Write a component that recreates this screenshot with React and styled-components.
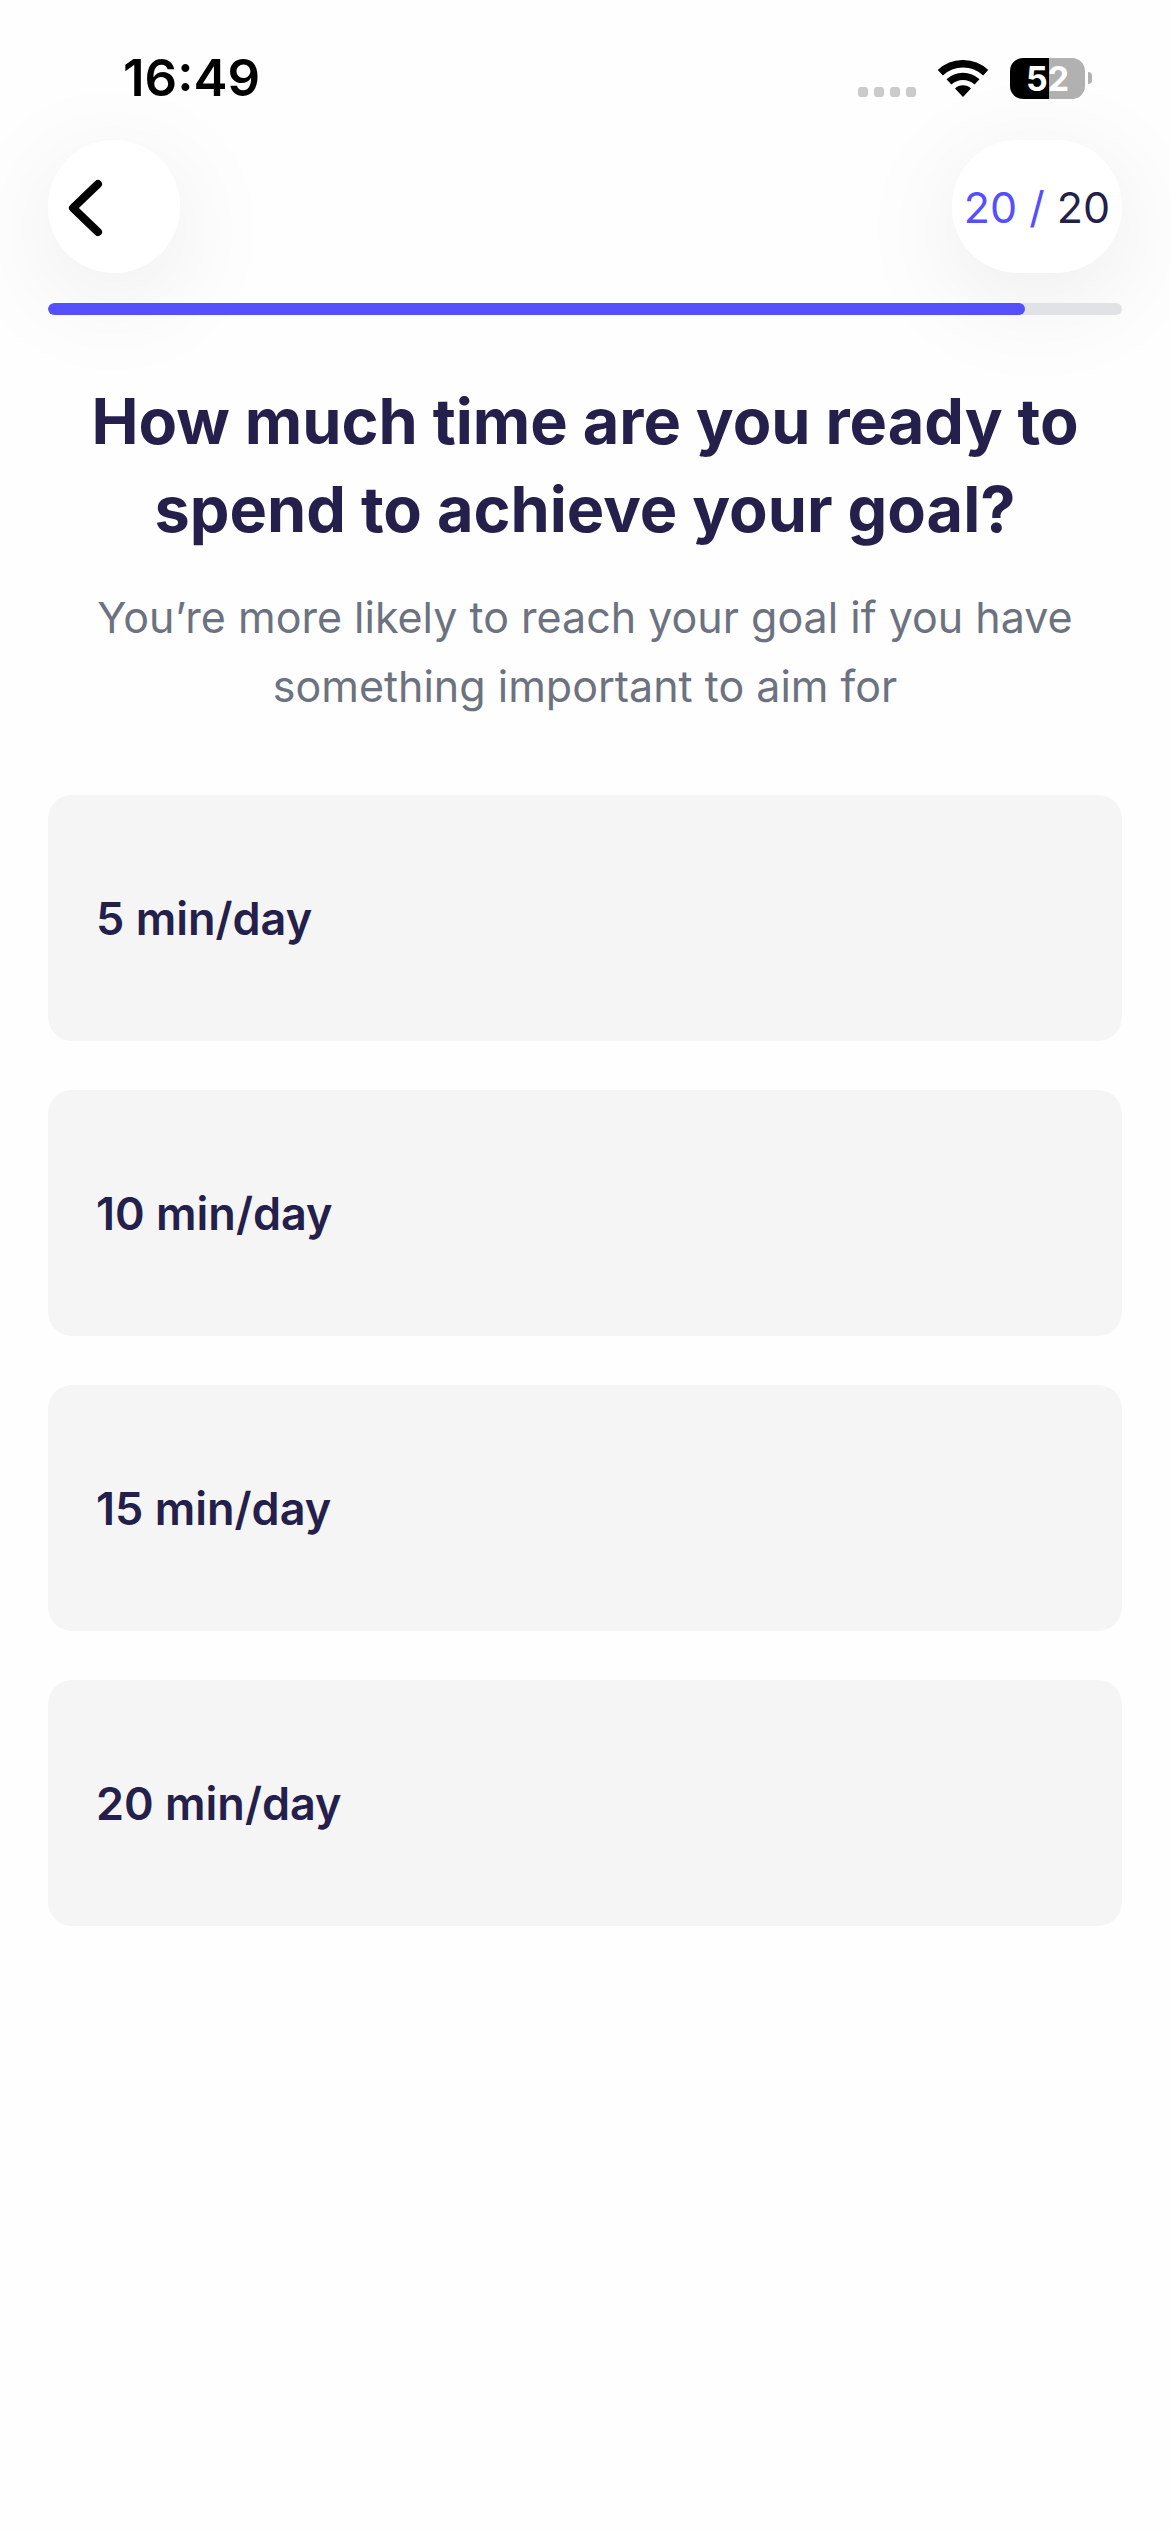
import React, { useState } from "react";
import styled, { createGlobalStyle } from "styled-components";

const colors = {
  ink: "#241f4b",
  accent: "#5550ff",
  muted: "#6d7280",
  card: "#f5f5f5",
  track: "#e0e2e5",
};

const GlobalStyle = createGlobalStyle`
  * { box-sizing: border-box; }
  body {
    margin: 0;
    background: #fefefe;
    color: ${colors.ink};
    font-family: Inter, "Liberation Sans", sans-serif;
  }
  button { font: inherit; color: inherit; border: 0; cursor: pointer; }
`;

const Screen = styled.div`
  display: flex;
  flex-direction: column;
  min-height: 100vh;
  padding: 0 48px 48px;
`;

const StatusBar = styled.div`
  display: flex;
  align-items: center;
  justify-content: space-between;
  height: 140px;
  padding: 16px 30px 0 75px;
  color: #000;
`;

const Clock = styled.time`
  font-size: 51px;
  font-weight: 600;
  line-height: 60px;
`;

const StatusIcons = styled.div`
  display: flex;
  align-items: center;
  gap: 22px;
  height: 37px;
`;

const SignalDots = styled.div`
  display: flex;
  gap: 6px;
  align-self: flex-end;
`;

const Dot = styled.span`
  width: 10px;
  height: 10px;
  border-radius: 3px;
  background: #cbcbcb;
`;

const Battery = styled.div`
  display: flex;
  align-items: center;
  gap: 3px;
`;

const BatteryBody = styled.div`
  width: 75px;
  height: 41px;
  border-radius: 13px;
  background: linear-gradient(to right, #000 52%, #b1b1b1 52%);
  color: #fff;
  font-size: 34px;
  font-weight: 700;
  line-height: 42px;
  text-align: center;
`;

const BatteryTip = styled.span`
  width: 4px;
  height: 12px;
  border-radius: 0 4px 4px 0;
  background: #b1b1b1;
`;

const Header = styled.header`
  display: flex;
  justify-content: space-between;
`;

const floating = `
  height: 133px;
  border-radius: 66px;
  background: #fff;
  box-shadow: 0 24px 110px rgba(0, 0, 0, 0.08);
`;

const BackButton = styled.button`
  ${floating}
  display: flex;
  align-items: center;
  width: 132px;
  padding: 2px 0 0 20px;
`;

const StepCounter = styled.div`
  ${floating}
  display: flex;
  align-items: center;
  justify-content: center;
  width: 170px;
  font-size: 43px;
  white-space: pre;
`;

const CurrentStep = styled.span`
  color: ${colors.accent};
`;

const Track = styled.div`
  position: relative;
  height: 12px;
  margin-top: 30px;
  border-radius: 6px;
  background: ${colors.track};
  overflow: hidden;
`;

const Fill = styled.div`
  height: 100%;
  border-radius: 6px;
  background: ${colors.accent};
`;

const Intro = styled.section`
  display: flex;
  flex-direction: column;
  gap: 30px;
  margin-top: 62px;
  text-align: center;
`;

const Title = styled.h1`
  margin: 0;
  font-size: 63px;
  font-weight: 700;
  line-height: 88px;
`;

const Subtitle = styled.p`
  margin: 0;
  color: ${colors.muted};
  font-size: 43px;
  line-height: 69px;
`;

const Options = styled.div`
  display: flex;
  flex-direction: column;
  gap: 49px;
  margin-top: 74px;
`;

const Option = styled.button`
  height: 246px;
  padding: 0 48px;
  border-radius: 24px;
  background: ${colors.card};
  font-size: 45px;
  font-weight: 600;
  text-align: left;
  outline-color: ${colors.accent};
`;

const WifiIcon = () => (
  <svg width="50" height="37" viewBox="0 0 50 37" fill="none" stroke="#000" aria-hidden="true">
    <path d="M2.3 12.7A33.25 33.25 0 0 1 47.7 12.7" strokeWidth="7.5" />
    <path d="M10.95 21.9A20.6 20.6 0 0 1 39.05 21.9" strokeWidth="7.3" />
    <path d="M17 28.4A11.7 11.7 0 0 1 33 28.4L25 37Z" fill="#000" stroke="none" />
  </svg>
);

const ChevronLeft = () => (
  <svg width="36" height="58" viewBox="0 0 36 58" fill="none" aria-hidden="true">
    <path
      d="M30 5L5 29L30 53"
      stroke="#000"
      strokeWidth="8"
      strokeLinecap="round"
      strokeLinejoin="round"
    />
  </svg>
);

const minutes = [5, 10, 15, 20];

export default function App() {
  const [choice, setChoice] = useState(null);
  const progress = 91;

  return (
    <>
      <GlobalStyle />
      <Screen>
        <StatusBar>
          <Clock>16:49</Clock>
          <StatusIcons>
            <SignalDots>
              <Dot />
              <Dot />
              <Dot />
              <Dot />
            </SignalDots>
            <WifiIcon />
            <Battery>
              <BatteryBody>52</BatteryBody>
              <BatteryTip />
            </Battery>
          </StatusIcons>
        </StatusBar>
        <Header>
          <BackButton type="button" aria-label="Back">
            <ChevronLeft />
          </BackButton>
          <StepCounter>
            <CurrentStep>20 / </CurrentStep>
            <span>20</span>
          </StepCounter>
        </Header>
        <Track role="progressbar" aria-label="Progress" aria-valuenow={progress}>
          <Fill style={{ width: `${progress}%` }} />
        </Track>
        <main>
          <Intro>
            <Title>How much time are you ready to spend to achieve your goal?</Title>
            <Subtitle>
              You’re more likely to reach your goal if you have something important to aim for
            </Subtitle>
          </Intro>
          <Options>
            {minutes.map((value) => (
              <Option
                key={value}
                type="button"
                aria-pressed={choice === value}
                onClick={() => setChoice(value)}
              >
                {value} min/day
              </Option>
            ))}
          </Options>
        </main>
      </Screen>
    </>
  );
}
